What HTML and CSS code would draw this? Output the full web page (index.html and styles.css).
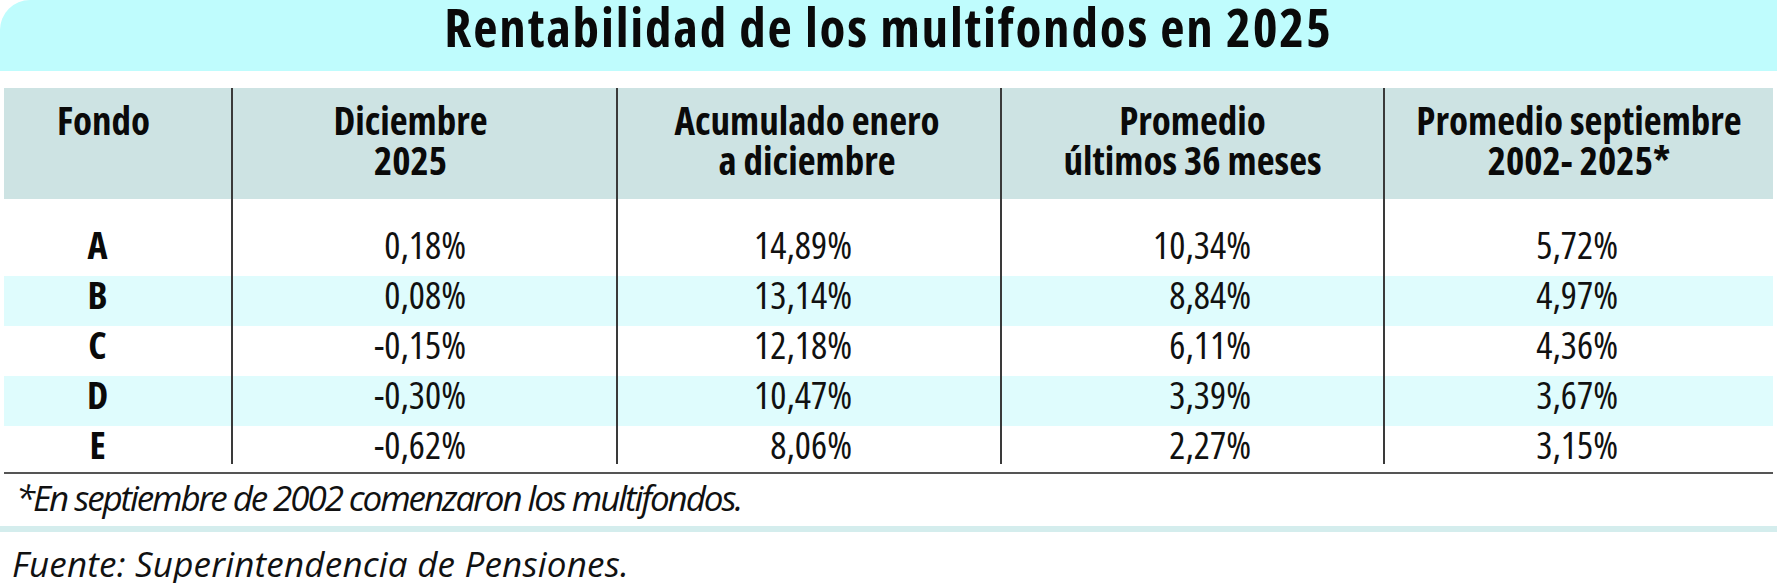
FILE: index.html
```html
<!DOCTYPE html>
<html lang="es">
<head>
<meta charset="utf-8">
<title>Rentabilidad de los multifondos en 2025</title>
<link rel="stylesheet" href="styles.css">
</head>
<body>
<div class="page">
  <h1 class="title">Rentabilidad de los multifondos en 2025</h1>
  <div class="table">
    <div class="row head">
      <div class="cell c1">Fondo</div>
      <div class="cell c2">Diciembre<br>2025</div>
      <div class="cell c3">Acumulado enero<br>a diciembre</div>
      <div class="cell c4">Promedio<br>últimos 36 meses</div>
      <div class="cell c5">Promedio septiembre<br>2002- 2025*</div>
    </div>
    <div class="row spacer">
      <div class="cell c1"></div><div class="cell c2"></div><div class="cell c3"></div><div class="cell c4"></div><div class="cell c5"></div>
    </div>
    <div class="row data">
      <div class="cell c1">A</div><div class="cell c2">0,18%</div><div class="cell c3">14,89%</div><div class="cell c4">10,34%</div><div class="cell c5">5,72%</div>
    </div>
    <div class="row data alt">
      <div class="cell c1">B</div><div class="cell c2">0,08%</div><div class="cell c3">13,14%</div><div class="cell c4">8,84%</div><div class="cell c5">4,97%</div>
    </div>
    <div class="row data">
      <div class="cell c1">C</div><div class="cell c2">-0,15%</div><div class="cell c3">12,18%</div><div class="cell c4">6,11%</div><div class="cell c5">4,36%</div>
    </div>
    <div class="row data alt">
      <div class="cell c1">D</div><div class="cell c2">-0,30%</div><div class="cell c3">10,47%</div><div class="cell c4">3,39%</div><div class="cell c5">3,67%</div>
    </div>
    <div class="row data last">
      <div class="cell c1">E</div><div class="cell c2">-0,62%</div><div class="cell c3">8,06%</div><div class="cell c4">2,27%</div><div class="cell c5">3,15%</div>
    </div>
  </div>
  <p class="note">*En septiembre de 2002 comenzaron los multifondos.</p>
  <div class="separator"></div>
  <p class="source">Fuente: Superintendencia de Pensiones.</p>
</div>
</body>
</html>
```

FILE: styles.css
```css
html, body {
  margin: 0;
  padding: 0;
  background: #ffffff;
}

body {
  width: 1777px;
  height: 583px;
  overflow: hidden;
  font-family: "Open Sans", "Liberation Sans", sans-serif;
  font-stretch: 75%;
  color: #111111;
}

.page {
  display: flex;
  flex-direction: column;
}

.title {
  margin: 0;
  height: 71px;
  padding-bottom: 18px;
  box-sizing: border-box;
  background: #bffcfd;
  border-top-left-radius: 30px;
  text-align: center;
  font-stretch: 75%;
  font-size: 53px;
  line-height: 53px;
  letter-spacing: 1.8px;
  font-weight: 700;
  color: #0a0a0a;
}

.table {
  margin: 17px 4px 0 4px;
  padding-bottom: 8px;
  border-bottom: 2px solid #555555;
}

.row {
  display: grid;
  grid-template-columns: 227px 385px 384px 383px 390px;
}

.cell {
  box-sizing: border-box;
}

.cell.c2, .cell.c3, .cell.c4, .cell.c5 {
  border-left: 2px solid #3a3a3a;
}

.head {
  height: 111px;
  background: #cde3e3;
}

.head .cell {
  padding-top: 12px;
  font-stretch: 75%;
  font-size: 39px;
  line-height: 40px;
  font-weight: 700;
  text-align: center;
  color: #0a0a0a;
  white-space: nowrap;
}

.head .c1 { padding-right: 28px; }
.head .c2 { padding-right: 28px; }
.head .c3 { padding-right: 4px; }

.spacer {
  height: 27px;
}

.data {
  height: 50px;
}

.data.alt {
  background: #dffcfd;
}

.data.last {
  height: 38px;
}

.data .cell {
  font-stretch: 75%;
  font-size: 38px;
  line-height: 37px;
  text-align: right;
}

.data .c1 {
  text-align: center;
  font-weight: 700;
  padding-right: 40px;
  color: #0a0a0a;
}

.data .c2 { padding-right: 150px; }
.data .c3 { padding-right: 148px; }
.data .c4 { padding-right: 132px; }
.data .c5 { padding-right: 155px; }

.note {
  margin: 0;
  height: 52px;
  padding-left: 16px;
  font-stretch: 90%;
  font-size: 35px;
  line-height: 47px;
  letter-spacing: -2.1px;
  font-style: italic;
}

.separator {
  height: 6px;
  background: #d4eded;
}

.source {
  margin: 0;
  padding-left: 12px;
  font-stretch: 90%;
  font-size: 35px;
  line-height: 63px;
  letter-spacing: 0.2px;
  font-style: italic;
}
```
